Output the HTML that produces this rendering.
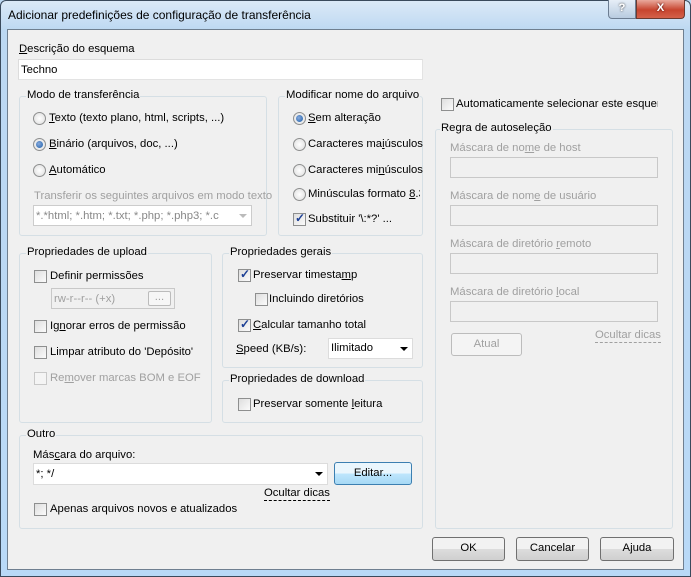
<!DOCTYPE html><html><head><meta charset="utf-8"><style>
*{box-sizing:border-box}
body{margin:0;width:691px;height:577px;overflow:hidden;font:11.3px "Liberation Sans",sans-serif;color:#000;background:#bcd8f2}
.a{position:absolute;white-space:nowrap}
#frame{position:absolute;left:0;top:0;width:691px;height:577px;border:1px solid #3a4a5c;border-radius:6px 6px 0 0;background:linear-gradient(#dbe9f7,#bcd8f2 30px,#b9d9f7)}
#client{position:absolute;left:7px;top:29px;width:677px;height:541px;background:#f0f0f0;border:1px solid #6f7f90}
.g{position:absolute;border:1px solid #d5dfe5;border-radius:3px}
.lg{position:absolute;top:-8px;left:6px;background:#f0f0f0;padding:0 1px;white-space:nowrap}
.in{position:absolute;background:#fff;border:1px solid #abadb3;border-top-color:#abadb3}
.dis{background:#f0f0f0;border-color:#d9d9d9}
.gr{color:#a0a0a0}
.rb{position:absolute;width:13px;height:13px;border-radius:50%;border:1px solid #8e8f8f;background:radial-gradient(#fff,#dcdcdc)}
.rb.on:after{content:"";position:absolute;left:2px;top:2px;width:7px;height:7px;border-radius:50%;background:radial-gradient(circle at 40% 40%,#8ad,#1b5ea8)}
.cb{position:absolute;width:13px;height:13px;border:1px solid #8e8f8f;background:linear-gradient(135deg,#dedede,#fbfbfb)}
.cb.on:after{content:"✓";position:absolute;left:1px;top:-3px;font-size:12px;font-weight:bold;color:#1c3f95}
.cb.d{border-color:#c8c8c8;background:#f4f4f4}
.bt{position:absolute;border:1px solid #707070;border-radius:3px;background:linear-gradient(#f2f2f2 50%,#dddddd 50%,#cfcfcf);text-align:center;line-height:20px}
.u{text-decoration:underline}
.arr{position:absolute;width:0;height:0;border-left:4px solid transparent;border-right:4px solid transparent;border-top:4px solid #000}
</style></head><body>
<div id="frame"></div>
<div class="a" style="left:8px;top:8px;font-size:12px;color:#000">Adicionar predefinições de configuração de transferência</div>
<div class="a" style="left:608px;top:0;width:28px;height:19px;border:1px solid #6c7d92;border-top:0;border-radius:0 0 0 4px;background:linear-gradient(#e6eef7,#b8cbe0);text-align:center;color:#fff;font-weight:bold;line-height:17px;text-shadow:0 0 2px #333">?</div>
<div class="a" style="left:636px;top:0;width:49px;height:19px;border:1px solid #6c3a30;border-top:0;border-radius:0 0 4px 0;background:linear-gradient(#e9a99c,#c7452f 55%,#d4614a);text-align:center;color:#fff;font-weight:bold;line-height:17px;text-shadow:0 0 2px #400">X</div>
<div id="client"></div>

<div class="a" style="left:19px;top:43px"><span class="u">D</span>escrição do esquema</div>
<div class="in" style="left:18px;top:59px;width:405px;height:21px;border-color:#dcdcdc #e3e3e3 #e3e3e3 #dcdcdc"><span class="a" style="left:2px;top:4px">Techno</span></div>

<div class="g" style="left:19px;top:96px;width:248px;height:140px"><span class="lg">Modo de transferência</span></div>
<div class="rb" style="left:33px;top:112px"></div><div class="a" style="left:49px;top:112px"><span class="u">T</span>exto (texto plano, html, scripts, ...)</div>
<div class="rb on" style="left:33px;top:138px"></div><div class="a" style="left:49px;top:138px"><span class="u">B</span>inário (arquivos, doc, ...)</div>
<div class="rb" style="left:33px;top:164px"></div><div class="a" style="left:49px;top:164px"><span class="u">A</span>utomático</div>
<div class="a gr" style="left:34px;top:190px">Transferir os seguintes arquivos em modo texto</div>
<div class="in" style="left:33px;top:205px;width:219px;height:21px;border-color:#ccc;overflow:hidden"><span class="a gr" style="left:2px;top:4px;color:#888">*.*html; *.htm; *.txt; *.php; *.php3; *.c</span><span class="a" style="left:200px;top:0;width:17px;height:19px;background:#fff"></span><span class="arr" style="left:205px;top:8px;border-top-color:#bbb"></span></div>

<div class="g" style="left:278px;top:96px;width:145px;height:140px"><span class="lg">Modificar nome do arquivo</span></div>
<div class="rb on" style="left:293px;top:112px"></div><div class="a" style="left:308px;top:112px"><span class="u">S</span>em alteração</div>
<div class="rb" style="left:293px;top:138px"></div><div class="a" style="left:308px;top:138px">Caracteres ma<span class="u">i</span>úsculos</div>
<div class="rb" style="left:293px;top:164px"></div><div class="a" style="left:308px;top:164px">Caracteres mi<span class="u">n</span>úsculos</div>
<div class="rb" style="left:293px;top:188px"></div><div class="a" style="left:308px;top:188px;width:112px;overflow:hidden">Minúsculas formato <span class="u">8</span>.3</div>
<div class="cb on" style="left:293px;top:213px"></div><div class="a" style="left:308px;top:213px">Substituir '\:*?' ...</div>

<div class="cb" style="left:441px;top:98px"></div><div class="a" style="left:456px;top:98px;width:202px;overflow:hidden">Automaticamente selecionar este esquema</div>
<div class="g" style="left:435px;top:129px;width:238px;height:400px"><span class="lg" style="left:4px">Regra de autoseleção</span></div>
<div class="a gr" style="left:450px;top:142px">Máscara de no<span class="u">m</span>e de host</div>
<div class="in dis" style="left:450px;top:157px;width:208px;height:21px;border-color:#c8c8c8"></div>
<div class="a gr" style="left:450px;top:190px">Máscara de nom<span class="u">e</span> de usuário</div>
<div class="in dis" style="left:450px;top:205px;width:208px;height:21px;border-color:#c8c8c8"></div>
<div class="a gr" style="left:450px;top:238px">Máscara de diretório <span class="u">r</span>emoto</div>
<div class="in dis" style="left:450px;top:253px;width:208px;height:21px;border-color:#c8c8c8"></div>
<div class="a gr" style="left:450px;top:286px">Máscara de diretório <span class="u">l</span>ocal</div>
<div class="in dis" style="left:450px;top:301px;width:208px;height:21px;border-color:#c8c8c8"></div>
<div class="a gr" style="left:451px;top:333px;width:71px;height:23px;border:1px solid #bcbcbc;border-radius:3px;background:#f4f4f4;text-align:center;line-height:21px">Atual</div>
<div class="a gr" style="left:595px;top:329px;border-bottom:1px dashed #a0a0a0;line-height:13px">Ocultar dicas</div>

<div class="g" style="left:19px;top:253px;width:193px;height:170px"><span class="lg">Propriedades de upload</span></div>
<div class="cb" style="left:34px;top:270px"></div><div class="a" style="left:50px;top:270px">Definir permissões</div>
<div class="in dis" style="left:51px;top:288px;width:124px;height:21px;border-color:#c8c8c8"><span class="a gr" style="left:2px;top:4px">rw-r--r-- (+x)</span><span class="a gr" style="left:96px;top:2px;width:23px;height:15px;border:1px solid #bbb;border-radius:2px;background:#f6f6f6;text-align:center;line-height:10px">...</span></div>
<div class="cb" style="left:34px;top:320px"></div><div class="a" style="left:50px;top:320px">Ig<span class="u">n</span>orar erros de permissão</div>
<div class="cb" style="left:34px;top:346px"></div><div class="a" style="left:50px;top:346px">Limpar atributo do 'Depósito'</div>
<div class="cb d" style="left:34px;top:372px"></div><div class="a gr" style="left:50px;top:372px">Re<span class="u">m</span>over marcas BOM e EOF</div>

<div class="g" style="left:222px;top:253px;width:201px;height:115px"><span class="lg">Propriedades gerais</span></div>
<div class="cb on" style="left:238px;top:269px"></div><div class="a" style="left:253px;top:269px">Preservar timesta<span class="u">m</span>p</div>
<div class="cb" style="left:255px;top:293px"></div><div class="a" style="left:269px;top:293px">Incluindo diretórios</div>
<div class="cb on" style="left:238px;top:319px"></div><div class="a" style="left:253px;top:319px"><span class="u">C</span>alcular tamanho total</div>
<div class="a" style="left:236px;top:343px"><span class="u">S</span>peed (KB/s):</div>
<div class="in" style="left:328px;top:338px;width:85px;height:21px;border-color:#dcdcdc"><span class="a" style="left:2px;top:3px">Ilimitado</span><span class="arr" style="left:71px;top:8px"></span></div>

<div class="g" style="left:222px;top:380px;width:201px;height:43px"><span class="lg">Propriedades de download</span></div>
<div class="cb" style="left:238px;top:398px"></div><div class="a" style="left:253px;top:398px">Preservar somente <span class="u">l</span>eitura</div>

<div class="g" style="left:19px;top:435px;width:404px;height:94px"><span class="lg" style="left:6px">Outro</span></div>
<div class="a" style="left:33px;top:449px">Más<span class="u">c</span>ara do arquivo:</div>
<div class="in" style="left:33px;top:463px;width:295px;height:22px;border-color:#dcdcdc"><span class="a" style="left:2px;top:4px">*; */</span><span class="arr" style="left:281px;top:8px"></span></div>
<div class="bt" style="left:334px;top:462px;width:78px;height:23px;border-color:#3c7fb1;background:linear-gradient(#eaf6fd 50%,#bee6fd 50%,#a7d9f5)">Editar...</div>
<div class="a" style="left:264px;top:487px;border-bottom:1px dashed #000;line-height:13px">Ocultar dicas</div>
<div class="cb" style="left:34px;top:503px"></div><div class="a" style="left:50px;top:503px">Apenas arquivos novos e atualizados</div>

<div class="bt" style="left:432px;top:537px;width:73px;height:24px">OK</div>
<div class="bt" style="left:516px;top:537px;width:73px;height:24px">Cancelar</div>
<div class="bt" style="left:600px;top:537px;width:74px;height:24px">Ajuda</div>
</body></html>
